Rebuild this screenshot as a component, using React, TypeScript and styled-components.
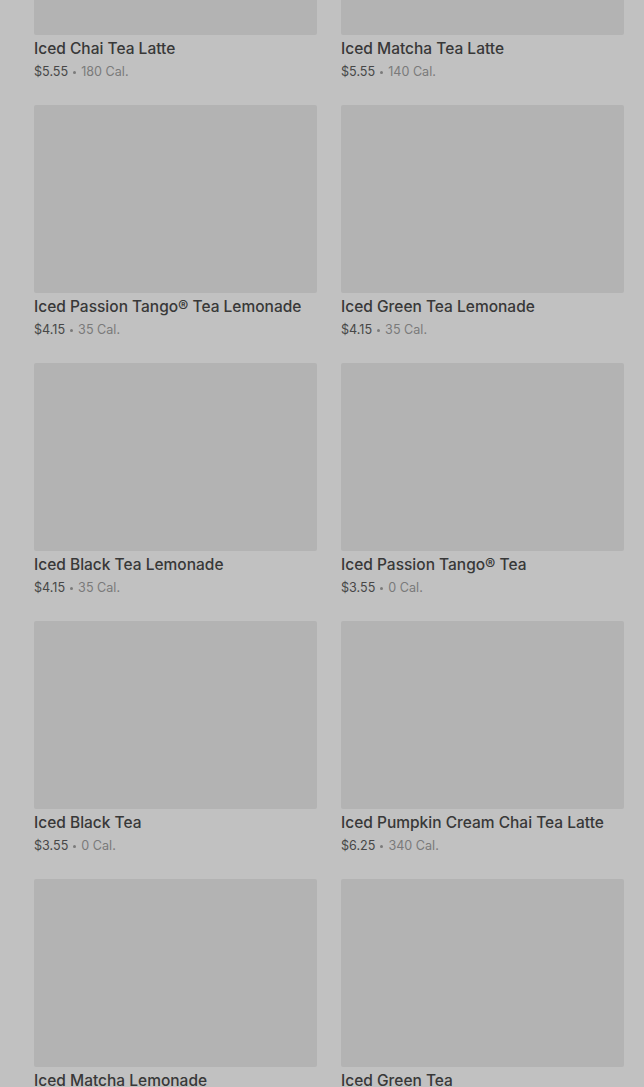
import React from "react";
import styled, { createGlobalStyle } from "styled-components";

const GlobalStyle = createGlobalStyle`
  html, body {
    margin: 0;
    padding: 0;
    background: #c1c1c1;
    overflow: hidden;
  }
  body {
    font-family: Inter, "Noto Sans", "Liberation Sans", sans-serif;
  }
`;

const Page = styled.div`
  height: 1087px;
  overflow: hidden;
  background: #c1c1c1;
`;

const Grid = styled.div`
  margin-top: -153px;
  padding: 0 20px 0 34px;
  display: grid;
  grid-template-columns: 283px 283px;
  column-gap: 24px;
`;

const Card = styled.div`
  display: flex;
  flex-direction: column;
  height: 258px;
`;

const Thumb = styled.div`
  height: 188px;
  background: #b3b3b3;
  border-radius: 2px;
`;

const Name = styled.div`
  margin-top: 2px;
  font-size: 15.5px;
  font-weight: 500;
  line-height: 24px;
  color: #383838;
  white-space: nowrap;
`;

const Meta = styled.div`
  display: flex;
  align-items: center;
  gap: 5px;
  font-size: 12.6px;
  line-height: 22px;
  color: #474747;
`;

const Cal = styled.span`
  color: #7a7a7a;
`;

const Dot = styled.span`
  width: 3px;
  height: 3px;
  border-radius: 50%;
  background: #7a7a7a;
`;

const items = [
  { name: "Iced Chai Tea Latte", price: "$5.55", cal: 180 },
  { name: "Iced Matcha Tea Latte", price: "$5.55", cal: 140 },
  { name: "Iced Passion Tango® Tea Lemonade", price: "$4.15", cal: 35 },
  { name: "Iced Green Tea Lemonade", price: "$4.15", cal: 35 },
  { name: "Iced Black Tea Lemonade", price: "$4.15", cal: 35 },
  { name: "Iced Passion Tango® Tea", price: "$3.55", cal: 0 },
  { name: "Iced Black Tea", price: "$3.55", cal: 0 },
  { name: "Iced Pumpkin Cream Chai Tea Latte", price: "$6.25", cal: 340 },
  { name: "Iced Matcha Lemonade", price: "$4.15", cal: 100 },
  { name: "Iced Green Tea", price: "$3.55", cal: 0 },
];

export default function App() {
  return (
    <Page>
      <GlobalStyle />
      <Grid>
        {items.map((item) => (
          <Card key={item.name}>
            <Thumb />
            <Name>{item.name}</Name>
            <Meta>
              <span>{item.price}</span>
              <Dot />
              <Cal>{item.cal} Cal.</Cal>
            </Meta>
          </Card>
        ))}
      </Grid>
    </Page>
  );
}
